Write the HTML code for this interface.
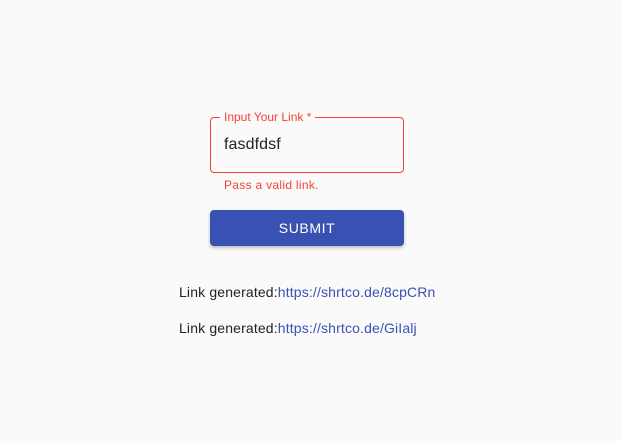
<!DOCTYPE html>
<html><head><style>
body{margin:0;width:623px;height:441px;background:#fafafa;font-family:"Liberation Sans",Arial,sans-serif;position:relative;overflow:hidden}
.box{position:absolute;left:210px;top:117px;width:192px;height:54px;border:1px solid #f44336;border-radius:4px}
.lbl{position:absolute;left:220px;top:110px;background:#fafafa;padding:0 4px;font-size:12px;color:#f44336;line-height:14px}
.val{position:absolute;left:224px;top:135px;font-size:16px;color:#222;line-height:19px;letter-spacing:.1px}
.err{position:absolute;left:224px;top:178px;font-size:12px;color:#f44336;letter-spacing:.3px}
.btn{position:absolute;left:210px;top:210px;width:194px;height:36px;background:#3a51b4;border-radius:4px;box-shadow:0 2px 3px rgba(0,0,0,.25);color:#fff;font-size:14px;letter-spacing:.6px;text-align:center;line-height:36px}
.l{position:absolute;left:179px;font-size:14px;color:#222;letter-spacing:.15px}
.l span{color:#3a51b4}
</style></head><body>
<div class="box"></div>
<div class="lbl">Input Your Link *</div>
<div class="val">fasdfdsf</div>
<div class="err">Pass a valid link.</div>
<div class="btn">SUBMIT</div>
<div class="l" style="top:284px">Link generated:<span>https://shrtco.de/8cpCRn</span></div>
<div class="l" style="top:320px">Link generated:<span>https://shrtco.de/GiIalj</span></div>
</body></html>
